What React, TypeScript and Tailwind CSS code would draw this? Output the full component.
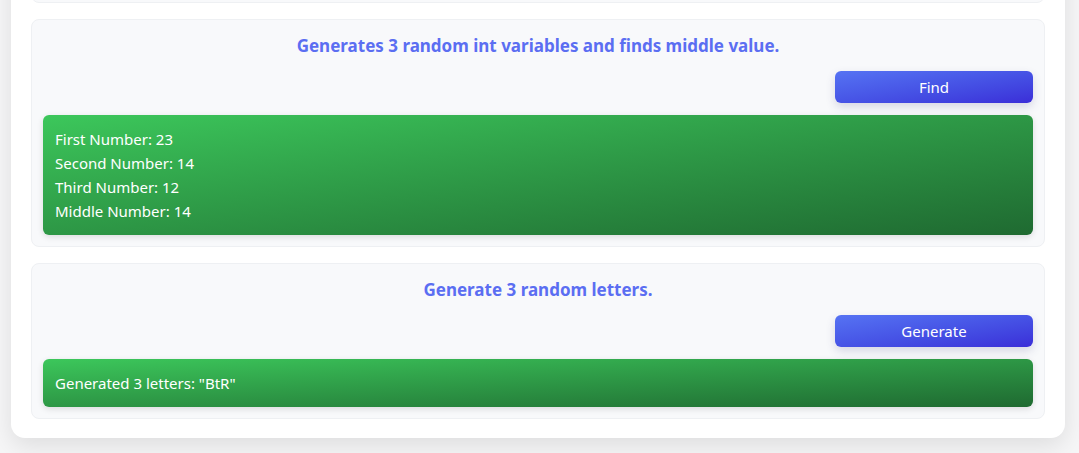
const Section = ({
  title,
  button,
  lines,
  className,
}: {
  title: string;
  button: string;
  lines: string[];
  className?: string;
}) => {
  return (
    <div
      className={`bg-[#f8f9fb] border border-[#eef0f3] rounded-lg p-[11px] flex flex-col ${className ?? ""}`}
    >
      <h3 className="text-center text-[17px] font-bold leading-[30px] text-[#5b6ef2]">
        {title}
      </h3>
      <div className="flex justify-end mt-[10px]">
        <button className="w-[198px] h-8 rounded-md text-white text-[15px] bg-gradient-to-br from-[#5673f3] to-[#3b2dd8] shadow-[0_4px_10px_rgba(60,60,120,0.18)]">
          {button}
        </button>
      </div>
      <div className="mt-3 rounded-md px-3 py-3 text-white text-[15px] leading-6 bg-gradient-to-br from-[#3cc75b] to-[#1f6a31] shadow-[0_2px_6px_rgba(0,0,0,0.12)]">
        {lines.map((l) => (
          <div key={l}>{l}</div>
        ))}
      </div>
    </div>
  );
};

export default function App() {
  return (
    <div
      className="min-h-screen bg-[#f6f6f7] pl-[11px] pr-[14px] overflow-hidden"
      style={{ fontFamily: '"Noto Sans", "Open Sans", sans-serif' }}
    >
      {/* outer card, scrolled so only the bottom shows */}
      <div className="-mt-[199px] bg-white rounded-b-[14px] shadow-[0_8px_24px_rgba(0,0,0,0.10)] px-5 pt-5 pb-[19px] flex flex-col gap-4">
        <div className="h-[182px] bg-[#f8f9fb] border border-[#eef0f3] rounded-lg" />
        <Section
          title="Generates 3 random int variables and finds middle value."
          button="Find"
          lines={[
            "First Number: 23",
            "Second Number: 14",
            "Third Number: 12",
            "Middle Number: 14",
          ]}
        />
        <Section
          title="Generate 3 random letters."
          button="Generate"
          lines={['Generated 3 letters: "BtR"']}
        />
      </div>
    </div>
  );
}
